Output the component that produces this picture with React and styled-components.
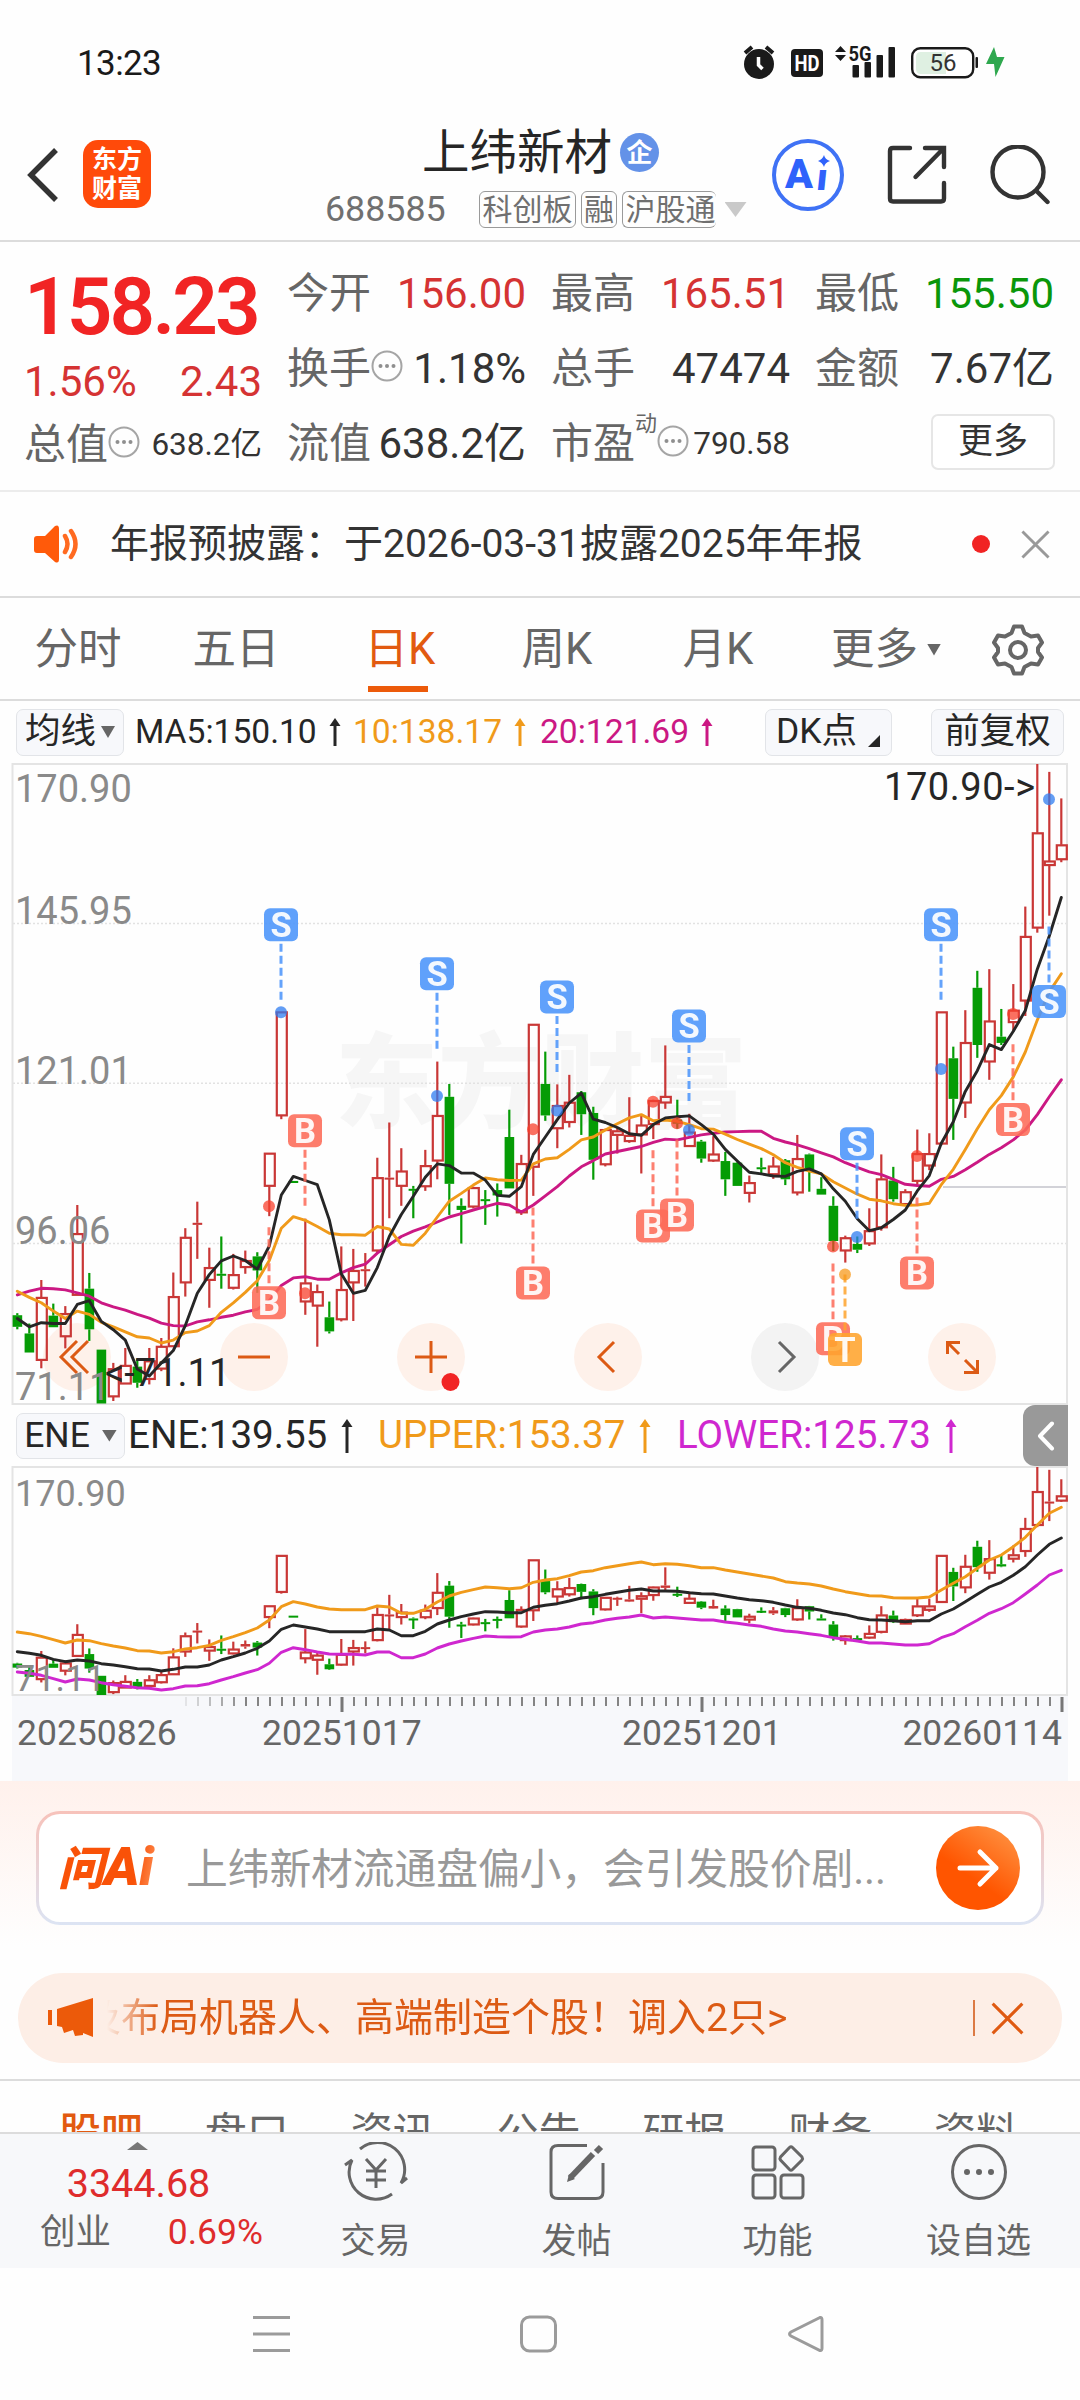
import styled, { createGlobalStyle } from "styled-components";

const RED = "#c93736";
const GREEN = "#059c05";

// [high, bodyTop, bodyBottom, low, up?] as levels below the top of the scale
const candles = [
  [1335, 1340, 1368, 1374, 0], [1360, 1384, 1430, 1430, 0], [1255, 1297, 1449, 1468, 1],
  [1312, 1341, 1369, 1369, 0], [1318, 1336, 1392, 1420, 1], [1074, 1143, 1292, 1292, 1],
  [1238, 1276, 1374, 1402, 0], [1423, 1423, 1553, 1553, 0], [1455, 1469, 1537, 1547, 1],
  [1419, 1461, 1506, 1506, 1], [1445, 1464, 1503, 1515, 0], [1419, 1450, 1495, 1507, 1],
  [1395, 1415, 1470, 1475, 1], [1237, 1295, 1416, 1416, 1], [1130, 1152, 1262, 1295, 1],
  [1066, 1117, 1122, 1204, 1], [1177, 1225, 1256, 1322, 1], [1150, 1240, 1244, 1276, 0],
  [1192, 1242, 1275, 1278, 1], [1184, 1208, 1225, 1240, 1], [1188, 1198, 1232, 1286, 0],
  [949, 949, 1029, 1101, 1], [608, 608, 859, 867, 1], [1016, 1016, 1021, 1021, 0],
  [1107, 1262, 1308, 1339, 1], [1266, 1283, 1318, 1416, 1], [1307, 1345, 1379, 1384, 0],
  [1174, 1278, 1351, 1355, 1], [1180, 1232, 1262, 1354, 1], [1190, 1229, 1233, 1271, 1],
  [960, 1008, 1185, 1190, 1], [875, 1008, 1011, 1106, 1], [937, 992, 1029, 1076, 1],
  [1028, 1035, 1039, 1106, 0], [941, 979, 1030, 1040, 1], [728, 858, 968, 1012, 1],
  [782, 813, 1023, 1098, 0], [1058, 1076, 1086, 1167, 0], [1030, 1032, 1079, 1082, 1],
  [1038, 1060, 1064, 1122, 0], [1022, 1038, 1051, 1102, 0], [844, 910, 1034, 1034, 0],
  [953, 974, 1093, 1098, 1], [638, 638, 983, 1052, 1], [704, 782, 858, 871, 0],
  [783, 834, 890, 937, 1], [760, 826, 875, 887, 1], [799, 802, 855, 905, 0],
  [837, 852, 965, 1013, 0], [890, 892, 977, 981, 1], [888, 895, 906, 950, 1],
  [814, 906, 921, 924, 1], [858, 881, 905, 998, 1], [820, 822, 880, 915, 1],
  [689, 812, 828, 842, 1], [820, 868, 878, 890, 0], [854, 898, 933, 934, 1],
  [917, 921, 962, 972, 0], [908, 951, 968, 970, 1], [946, 968, 1012, 1052, 0],
  [970, 972, 1028, 1028, 0], [1003, 1020, 1046, 1068, 1], [960, 983, 987, 998, 0],
  [958, 980, 1001, 1011, 1], [963, 966, 1012, 1026, 0], [905, 962, 1045, 1051, 1],
  [950, 952, 988, 1042, 0], [1007, 1035, 1049, 1049, 0], [1053, 1076, 1161, 1185, 0],
  [1148, 1153, 1185, 1213, 1], [1150, 1168, 1182, 1190, 0], [1082, 1136, 1168, 1173, 1],
  [952, 1011, 1129, 1136, 1], [982, 1015, 1060, 1066, 0], [1036, 1042, 1073, 1073, 1],
  [892, 950, 1017, 1025, 1], [901, 950, 980, 990, 1], [608, 608, 927, 930, 1],
  [692, 720, 818, 917, 0], [604, 682, 828, 864, 1], [509, 550, 688, 719, 0],
  [505, 630, 729, 772, 1], [601, 668, 683, 688, 0], [541, 604, 634, 656, 1],
  [354, 426, 582, 618, 1], [10, 176, 406, 417, 1], [29, 244, 255, 376, 1],
  [93, 205, 241, 247, 1],
];

const ma5 = [
  1348, 1368, 1358, 1360, 1360, 1314, 1305, 1355, 1375, 1400, 1470, 1487, 1455, 1425, 1365,
  1287, 1242, 1209, 1197, 1208, 1229, 1173, 1050, 1005, 1015, 1025, 1110, 1240, 1287, 1280,
  1225, 1150, 1097, 1053, 1007, 975, 979, 997, 997, 1014, 1051, 1053, 1030, 952, 910, 868,
  828, 804, 867, 875, 887, 902, 906, 880, 864, 861, 859, 880, 903, 940, 968, 995, 999, 1004,
  1005, 993, 987, 999, 1035, 1065, 1107, 1136, 1129, 1109, 1086, 1040, 1003, 925, 873, 800,
  750, 687, 699, 655, 605, 505, 425, 332,
];
const ma10 = [
  1282, 1297, 1310, 1330, 1348, 1330, 1338, 1357, 1368, 1380, 1392, 1395, 1407, 1400, 1382,
  1378, 1365, 1333, 1310, 1285, 1257, 1208, 1130, 1102, 1111, 1126, 1142, 1146, 1146, 1147,
  1126, 1132, 1169, 1171, 1142, 1103, 1065, 1046, 1026, 1009, 1013, 1015, 1014, 975, 963,
  960, 940, 917, 910, 893, 878, 864, 856, 871, 869, 872, 880, 890, 891, 903, 916, 927, 938,
  953, 972, 983, 992, 999, 1018, 1033, 1048, 1060, 1064, 1071, 1075, 1074, 1070, 1025, 988,
  940, 890, 844, 810, 765, 705, 628, 560, 516,
];
const ma20 = [
  1291, 1282, 1275, 1276, 1279, 1286, 1294, 1310, 1320, 1328, 1338, 1347, 1359, 1365, 1366,
  1356, 1351, 1345, 1340, 1332, 1326, 1305, 1268, 1250, 1247, 1253, 1253, 1238, 1225, 1217,
  1190, 1170, 1150, 1137, 1127, 1115, 1103, 1095, 1086, 1078, 1070, 1074, 1091, 1074, 1052,
  1030, 1004, 982, 967, 951, 945, 939, 933, 923, 915, 917, 911, 905, 901, 898, 897, 896, 896,
  913, 922, 929, 938, 948, 958, 972, 983, 994, 1001, 1012, 1024, 1027, 1029, 1012, 1005, 989,
  971, 952, 936, 917, 893, 856, 813, 772,
];

// ENE bands, levels on the lower panel (201 = top, 884 = bottom)
const eneMid = [
  755, 760, 766, 778, 785, 780, 783, 791, 795, 800, 806, 807, 813, 808, 801, 801, 795, 780,
  770, 759, 745, 723, 688, 675, 681, 687, 695, 695, 695, 695, 687, 690, 707, 707, 694, 672,
  660, 650, 642, 635, 636, 638, 638, 622, 616, 611, 603, 594, 590, 583, 577, 571, 567, 573,
  573, 574, 578, 581, 582, 588, 594, 599, 602, 607, 615, 622, 625, 631, 639, 644, 653, 659,
  660, 662, 665, 662, 662, 642, 627, 605, 583, 561, 547, 526, 500, 465, 433, 414,
];
const eneUpper = [
  696, 701, 709, 719, 729, 720, 722, 731, 738, 744, 752, 753, 759, 755, 747, 743, 736, 721,
  710, 698, 684, 660, 620, 605, 612, 621, 627, 629, 629, 629, 618, 621, 640, 640, 628, 606,
  588, 577, 569, 561, 563, 566, 563, 547, 540, 536, 527, 516, 512, 503, 497, 491, 486, 494,
  491, 493, 497, 503, 503, 510, 516, 522, 528, 534, 545, 549, 552, 558, 567, 575, 581, 587,
  588, 593, 594, 594, 591, 570, 550, 530, 505, 480, 465, 440, 412, 375, 340, 322,
];
const eneLower = [
  816, 820, 826, 836, 846, 837, 840, 848, 854, 859, 863, 865, 870, 866, 858, 857, 851, 840,
  830, 819, 809, 790, 757, 743, 749, 756, 762, 763, 763, 765, 756, 756, 773, 773, 762, 744,
  732, 723, 715, 708, 710, 711, 710, 696, 690, 687, 681, 672, 668, 660, 655, 651, 645, 654,
  651, 654, 657, 660, 660, 666, 670, 675, 679, 687, 693, 696, 701, 706, 713, 718, 723, 729,
  729, 732, 735, 735, 731, 713, 701, 680, 661, 640, 626, 608, 582, 555, 525, 511,
];

// trade marks: candle index, letter, badge level, dash from/to, dot level
const marks = [
  [22, "S", 398, 444, 580, 609],
  [24, "B", 895, 941, 1076, 1287],
  [21, "B", 1310, 1128, 1264, 1077],
  [35, "S", 516, 562, 697, 811],
  [45, "S", 572, 618, 753, 846],
  [43, "B", 1262, 1080, 1216, 891],
  [53, "B", 1125, 942, 1078, 825],
  [55, "B", 1098, 916, 1051, 877],
  [56, "S", 642, 688, 823, 893],
  [68, "B", 1397, 1215, 1350, 1174],
  [69, "T", 1423, 1242, 1376, 1242],
  [70, "S", 926, 972, 1107, 1151],
  [75, "B", 1238, 1056, 1191, 956],
  [77, "S", 398, 444, 580, 746],
  [83, "B", 868, 686, 823, 613],
  [86, "S", 583, 402, 538, 95],
];
const markColor = { S: "#4a94fb", B: "#fd6b58", T: "#ffa42e" };
const dotColor = { S: "#2f7cf0", B: "#f8402c", T: "#f79a1c" };

const xAt = (i) => 17.3 + i * 12;
const mainY = (v) => 1 + ((v - 10) / 1543) * 639.5;
const subY = (v) => 1 + ((v - 10) / 1543) * 228;
const bandY = (v) => 1 + (v - 201) / 3;
const toPoints = (list, y) => list.map((v, i) => `${xAt(i)},${y(v).toFixed(1)}`).join(" ");

function Candles({ y }) {
  return candles.map(([high, top, bottom, low, up], i) => {
    const x = xAt(i);
    const color = up ? RED : GREEN;
    const h = y(bottom) - y(top);
    const hollow = up && h > 3.2;
    return (
      <g key={i} stroke={color} strokeWidth="2.2" fill="none">
        {top > high && <path d={`M${x} ${y(high)}V${y(top)}`} />}
        {low > bottom && <path d={`M${x} ${y(bottom)}V${y(low)}`} />}
        {hollow ? (
          <rect x={x - 4.5} y={y(top) + 0.5} width="10" height={Math.max(h - 1, 1)} />
        ) : (
          <rect x={x - 4.7} y={y(top)} width="9.6" height={Math.max(h, 2)} fill={color} stroke="none" />
        )}
      </g>
    );
  });
}

function Line({ list, y, color }) {
  return (
    <polyline points={toPoints(list, y)} fill="none" stroke={color} strokeWidth="2.9" strokeLinejoin="round" strokeLinecap="round" />
  );
}

function Marks() {
  return marks.map(([i, letter, level, from, to, dot]) => {
    const x = xAt(i) - 0.3;
    const y = mainY(level);
    return (
      <g key={i + letter}>
        <path d={`M${x} ${mainY(from)}V${mainY(to)}`} stroke={markColor[letter]} strokeWidth="3" strokeDasharray="8 4" opacity="0.85" />
        <circle cx={x} cy={mainY(dot)} r="6" fill={dotColor[letter]} opacity="0.75" />
        <rect x={x - 17} y={y - 16.5} width="34" height="33" rx="6" fill={markColor[letter]} opacity="0.88" />
        <text x={x} y={y + 12.3} textAnchor="middle" fontSize="34.5" fontWeight="700" fill="#fff" opacity="0.93">
          {letter}
        </text>
      </g>
    );
  });
}

function MainChart() {
  const grid = [395, 780, 1167];
  const labels = [["170.90", 38.5], ["145.95", 161], ["121.01", 321], ["96.06", 481], ["71.11", 637]];
  return (
    <ChartSvg width="1080" height="642" viewBox="0 0 1080 642">
      <text x="541" y="357" textAnchor="middle" fontSize="103" fontWeight="900" fill="#f6f6f6">
        东方财富
      </text>
      {grid.map((v) => (
        <path key={v} d={`M13 ${mainY(v)}H1067`} stroke="#e2e2e2" strokeWidth="1.5" strokeDasharray="2 2" />
      ))}
      <path d="M943 424H1067" stroke="#d2d2d8" strokeWidth="2" />
      <rect x="12.5" y="1" width="1054.5" height="640" fill="none" stroke="#e4e4e4" strokeWidth="2" />
      <Candles y={mainY} />
      <Line list={ma20} y={mainY} color="#cb1883" />
      <Line list={ma10} y={mainY} color="#f09a1a" />
      <Line list={ma5} y={mainY} color="#262626" />
      <Marks />
      <g fontSize="38" fill="#8a8a8a">
        {labels.map(([t, y]) => (
          <text key={t} x="15" y={y}>{t}</text>
        ))}
      </g>
      <g fontSize="38" fill="#262626">
        <text x="884" y="36.5" textLength="151">170.90-&gt;</text>
        <text x="105" y="623">&lt;-71.11</text>
      </g>
    </ChartSvg>
  );
}

function EneChart() {
  const ticks = Array.from({ length: 74 }, (_, n) => n + 14);
  return (
    <ChartSvg width="1080" height="315" viewBox="0 0 1080 315">
      <rect x="12" y="230" width="1056" height="85" fill="#f7f8fb" />
      <rect x="12.5" y="1" width="1054.5" height="228" fill="none" stroke="#e4e4e4" strokeWidth="2" />
      <Candles y={subY} />
      <Line list={eneUpper} y={bandY} color="#f09a1a" />
      <Line list={eneLower} y={bandY} color="#cf27cf" />
      <Line list={eneMid} y={bandY} color="#262626" />
      {ticks.map((i) => {
        const big = i === 27 || i === 57 || i === 87;
        return (
          <path
            key={i}
            d={`M${xAt(i) + 0.7} 231V${big ? 246 : 240}`}
            stroke="#777"
            strokeWidth={big ? 3 : 1.8}
            opacity={Math.min(1, (i - 13) / 6)}
          />
        );
      })}
      <g fontSize="36" fill="#8a8a8a">
        <text x="15" y="40">170.90</text>
        <text x="15" y="225">71.11</text>
      </g>
      <g fontSize="35.5" fill="#666">
        <text x="17" y="279">20250826</text>
        <text x="262" y="279">20251017</text>
        <text x="622" y="279">20251201</text>
        <text x="1062" y="279" textAnchor="end">20260114</text>
      </g>
    </ChartSvg>
  );
}

function Arrow({ color, h = 28 }) {
  return (
    <svg width="12" height={h} viewBox={`0 0 12 ${h}`}>
      <path d={`M6 4V${h}`} stroke={color} strokeWidth="3" />
      <path d="M6 0L11.5 8H0.5Z" fill={color} />
    </svg>
  );
}

function Dots() {
  return (
    <svg width="32" height="32" viewBox="0 0 32 32">
      <circle cx="16" cy="16" r="14.5" fill="none" stroke="#a5a5a5" strokeWidth="2" />
      <g fill="#8f8f8f">
        <circle cx="9.5" cy="16" r="2" />
        <circle cx="16" cy="16" r="2" />
        <circle cx="22.5" cy="16" r="2" />
      </g>
    </svg>
  );
}

function Cross({ size, color, width }) {
  return (
    <svg width={size} height={size} viewBox="0 0 30 30">
      <path d="M1.5 1.5L28.5 28.5M28.5 1.5L1.5 28.5" stroke={color} strokeWidth={width} />
    </svg>
  );
}

function StatusIcons() {
  return (
    <svg width="262" height="40" viewBox="743 43 262 40">
      <g fill="#1a1a1a">
        <circle cx="759" cy="64" r="15" />
        <path d="M745 53L752 47M766 47L773 53" stroke="#1a1a1a" strokeWidth="4" />
        <path d="M758.5 57V65L762.5 69" stroke="#fff" strokeWidth="3.5" fill="none" />
        <rect x="791" y="49" width="32" height="28" rx="4" />
        <path d="M835 52L840.5 46L846 52ZM835 55L840.5 61L846 55Z" />
        <rect x="852.5" y="65" width="6.5" height="12.5" rx="1" />
        <rect x="864.5" y="62" width="6.5" height="15.5" rx="1" />
        <rect x="876.5" y="55" width="6.5" height="22.5" rx="1" />
        <rect x="888.5" y="47" width="6.5" height="30.5" rx="1" />
        <rect x="975.5" y="57" width="2.5" height="11" rx="1" />
        <text x="848.5" y="60.5" fontSize="21" fontWeight="700" textLength="23" lengthAdjust="spacingAndGlyphs">5G</text>
      </g>
      <text x="807" y="71" fontSize="22" fontWeight="700" fill="#fff" textAnchor="middle" textLength="25" lengthAdjust="spacingAndGlyphs">HD</text>
      <rect x="912.2" y="48.2" width="61" height="29" rx="8" fill="#fff" stroke="#1a1a1a" strokeWidth="2.4" />
      <path d="M921 52H946V74H921Q916 74 916 69V57Q916 52 921 52Z" fill="#dff0e2" />
      <text x="943" y="71" fontSize="24" fill="#333" textAnchor="middle">56</text>
      <path d="M994 47L986 64H994L995.5 77L1004.5 57H997Z" fill="#2fa84f" />
    </svg>
  );
}

const cols = [
  [
    { label: "今开", value: "156.00", tone: "#d53333" },
    { label: "换手", value: "1.18%", info: true },
    { label: "流值", value: "638.2亿" },
  ],
  [
    { label: "最高", value: "165.51", tone: "#d53333" },
    { label: "总手", value: "47474" },
    { label: "市盈", value: "790.58", sup: "动", info: true, small: true },
  ],
  [
    { label: "最低", value: "155.50", tone: "#0a970a" },
    { label: "金额", value: "7.67亿" },
  ],
];

function QuoteCell({ label, value, tone, info, small, sup }) {
  return (
    <Cell>
      <Label>
        {label}
        {sup && <Sup>{sup}</Sup>}
        {info && <Dots />}
      </Label>
      <Value $tone={tone} $small={small}>{value}</Value>
    </Cell>
  );
}

export default function App() {
  return (
    <Page>
      <GlobalStyle />
      <StatusBar>
        <Clock>13:23</Clock>
        <StatusIcons />
      </StatusBar>

      <Header>
        <svg width="32" height="54" viewBox="0 0 32 54">
          <path d="M30 2L5 27L30 52" fill="none" stroke="#333" strokeWidth="5.5" />
        </svg>
        <Logo>
          <span>东方</span>
          <span>财富</span>
        </Logo>
        <Titles>
          <TitleRow>
            上纬新材<Verified>企</Verified>
          </TitleRow>
          <CodeRow>
            <Code>688585</Code>
            <Tag>科创板</Tag>
            <Tag>融</Tag>
            <Tag $cut>沪股通</Tag>
            <Triangle $w={22} $h={15} $color="#c9c9c9" />
          </CodeRow>
        </Titles>
        <HeaderIcons>
          <svg width="72" height="72" viewBox="0 0 72 72">
            <circle cx="36" cy="36" r="34" fill="#fff" stroke="#3f72f5" strokeWidth="4" />
            <text x="13" y="49" fontSize="41" fontWeight="900" fill="#2f62fb">A</text>
            <text x="44" y="51" fontSize="38" fontWeight="900" fill="#2f62fb" transform="translate(5 0) skewX(-6)">i</text>
            <rect x="42" y="17" width="17" height="13" fill="#fff" />
            <path d="M52 16Q53 20.500 58 22Q53 23.500 52 28Q50.500 23.500 46 22Q50.500 20.500 52 16Z" fill="#2f62fb" />
          </svg>
          <svg width="60" height="60" viewBox="0 0 60 60" fill="none" stroke="#333" strokeWidth="4.4" strokeLinecap="round">
            <path d="M23 3H6Q3 3 3 6V53.500Q3 56.500 6 56.500H54Q57 56.500 57 53.500V38M38 3H57V22M56 4L28.500 32" />
          </svg>
          <svg width="60" height="60" viewBox="0 0 60 60" fill="none" stroke="#333" strokeWidth="4.4" strokeLinecap="round">
            <circle cx="28" cy="27" r="25.500" />
            <path d="M46.500 46L57.500 57" />
          </svg>
        </HeaderIcons>
      </Header>

      <Quote>
        <QuoteColumn>
          <Price>158.23</Price>
          <Change>
            <span>1.56%</span>
            <span>2.43</span>
          </Change>
          <QuoteCell label="总值" value="638.2亿" info small />
        </QuoteColumn>
        {cols.map((cells, n) => (
          <QuoteColumn key={n}>
            {cells.map((c) => (
              <QuoteCell key={c.label} {...c} />
            ))}
            {n === 2 && (
              <Cell $end>
                <MoreButton>更多</MoreButton>
              </Cell>
            )}
          </QuoteColumn>
        ))}
      </Quote>

      <Notice>
        <svg width="46" height="38" viewBox="0 0 46 38">
          <path d="M3 11H11L21 1Q25 -1 25 4V34Q25 39 21 37L11 28H3Q0 28 0 25V14Q0 11 3 11Z" fill="#ff5a0a" />
          <path d="M31 11Q36 19 31 27M37 6Q46 19 37 32" fill="none" stroke="#ff6a20" strokeWidth="4.5" strokeLinecap="round" />
        </svg>
        <NoticeText>年报预披露：于2026-03-31披露2025年年报</NoticeText>
        <RedDot />
        <Cross size={29} color="#999" width={3} />
      </Notice>

      <Periods>
        <Period>分时</Period>
        <Period>五日</Period>
        <Period $active>日K</Period>
        <Period>周K</Period>
        <Period>月K</Period>
        <Period>
          更多
          <Triangle $w={14} $h={12} $color="#666" $gap={9} />
        </Period>
        <Period>
          <svg width="52" height="52" viewBox="0 0 52 52" fill="none" stroke="#666" strokeWidth="4" strokeLinejoin="round">
            <path d="M22 2.500H30L32.500 9L39 12.500L46 11.500L50 18.500L46 24V28L50 33.500L46 40.500L39 39.500L32.500 43L30 49.500H22L19.500 43L13 39.500L6 40.500L2 33.500L6 28V24L2 18.500L6 11.500L13 12.500L19.500 9Z" />
            <circle cx="26" cy="26" r="8" />
          </svg>
        </Period>
      </Periods>

      <Averages>
        <Pill $w={108}>
          均线
          <Triangle $w={14} $h={12} $color="#666" $gap={5} />
        </Pill>
        <Average $w={218} $color="#262626">MA5:150.10<Arrow color="#262626" /></Average>
        <Average $w={187} $color="#f09a1a">10:138.17<Arrow color="#f09a1a" /></Average>
        <Average $w={180} $color="#cb1883">20:121.69<Arrow color="#cb1883" /></Average>
        <Pill $w={127} $push>
          DK点
          <svg width="13" height="30" viewBox="0 0 13 30"><path d="M12 18V30H0Z" fill="#262626" /></svg>
        </Pill>
        <Pill $w={133} $left={39}>前复权</Pill>
      </Averages>

      <ChartArea>
        <Controls>
          <RoundButton>
            <path d="M34 18L18 34L34 50M45 18L29 34L45 50" />
          </RoundButton>
          <RoundButton>
            <path d="M18 34H50" />
          </RoundButton>
          <RoundButton dot>
            <path d="M18 34H50M34 18V50" />
          </RoundButton>
          <RoundButton>
            <path d="M40 19L25 34L40 49" />
          </RoundButton>
          <RoundButton gray>
            <path d="M28 19L43 34L28 49" />
          </RoundButton>
          <RoundButton>
            <path d="M19.500 31V19.500H32M20 20L31 31M49.500 37V49.500H36M49 49L37 37" />
          </RoundButton>
        </Controls>
        <MainChart />
      </ChartArea>

      <EneBar>
        <Pill $w={109} $h={46}>
          ENE
          <Triangle $w={15} $h={12} $color="#666" $gap={12} />
        </Pill>
        <EneValue $w={250} $color="#262626">ENE:139.55<Arrow color="#262626" h={34} /></EneValue>
        <EneValue $w={299} $color="#f09a1a">UPPER:153.37<Arrow color="#f09a1a" h={34} /></EneValue>
        <EneValue $w={290} $color="#cf27cf">LOWER:125.73<Arrow color="#cf27cf" h={34} /></EneValue>
        <Collapse>
          <svg width="18" height="30" viewBox="0 0 18 30">
            <path d="M15 2.500L3 15L15 27.500" fill="none" stroke="#fff" strokeWidth="4" strokeLinecap="round" strokeLinejoin="round" />
          </svg>
        </Collapse>
      </EneBar>
      <EneChart />

      <Promo>
        <AskBox>
          <AskLogo>问<i>Ai</i></AskLogo>
          <AskText>上纬新材流通盘偏小，会引发股价剧...</AskText>
          <AskButton>
            <svg width="44" height="40" viewBox="0 0 44 40" fill="none" stroke="#fff" strokeWidth="5" strokeLinecap="round" strokeLinejoin="round">
              <path d="M4 20H40M24 4L40 20L24 36" />
            </svg>
          </AskButton>
        </AskBox>
        <Banner>
          <svg width="45" height="40" viewBox="0 0 45 40" fill="#ec5a0a">
            <rect x="0" y="12" width="4" height="15" />
            <path d="M9 11L45 0V39L35 35V37L27 38L25 32L16 35L14 29L9 28Z" />
          </svg>
          <BannerText>及布局机器人、高端制造个股！调入2只&gt;</BannerText>
          <Divider />
          <Cross size={33} color="#df5a12" width={2.8} />
        </Banner>
      </Promo>

      <Sections>
        {["股吧", "盘口", "资讯", "公告", "研报", "财务", "资料"].map((s, i) => (
          <Section key={s} $active={i === 0}>{s}</Section>
        ))}
      </Sections>

      <Footer>
        <IndexBox>
          <svg width="21" height="8" viewBox="0 0 21 8"><path d="M0 8L10.500 0L21 8Z" fill="#777" /></svg>
          <IndexValue>3344.68</IndexValue>
          <IndexRow>
            <span>创业</span>
            <IndexPct>0.69%</IndexPct>
          </IndexRow>
        </IndexBox>
        <Action>
          <svg width="66" height="60" viewBox="0 0 66 60" fill="none" stroke="#666" strokeWidth="3">
            <path d="M17 7A27 27 0 0 1 58 41L64 36M49 52A27 27 0 0 1 9 18L2 23" />
            <path d="M23 17L33 28L43 17M33 28V46M23 29H43M23 38H43" />
          </svg>
          交易
        </Action>
        <Action>
          <svg width="56" height="60" viewBox="0 0 56 60" fill="none" stroke="#666" strokeWidth="3">
            <path d="M38 3.500H9Q2 3.500 2 10V50Q2 56.500 9 56.500H47Q54 56.500 54 50V21" />
            <path d="M21 36L44 12" strokeWidth="6" />
            <path d="M47 10L52 5" strokeWidth="6" />
            <path d="M18 40L20 32L26 37Z" fill="#666" stroke="none" />
          </svg>
          发帖
        </Action>
        <Action>
          <svg width="54" height="60" viewBox="0 0 54 60" fill="none" stroke="#666" strokeWidth="3">
            <rect x="2" y="5" width="22" height="23" rx="3" />
            <rect x="2" y="33" width="22" height="23" rx="3" />
            <rect x="30" y="33" width="22" height="23" rx="3" />
            <path d="M38.500 5.500L29.500 15Q28.500 16.500 29.500 18L38.500 27.500Q40 29 41.500 27.500L51 18Q52 16.500 51 15L41.500 5.500Q40 4 38.500 5.500Z" />
          </svg>
          功能
        </Action>
        <Action>
          <svg width="58" height="60" viewBox="0 0 58 60">
            <circle cx="29" cy="30" r="26.500" fill="none" stroke="#666" strokeWidth="3" />
            <g fill="#666"><circle cx="17" cy="30" r="3" /><circle cx="29" cy="30" r="3" /><circle cx="41" cy="30" r="3" /></g>
          </svg>
          设自选
        </Action>
      </Footer>

      <NavBar>
        <svg width="37" height="38" viewBox="0 0 37 38" stroke="#9b9b9b" strokeWidth="3">
          <path d="M0 2.500H37M0 19H37M0 35.500H37" />
        </svg>
        <svg width="37" height="38" viewBox="0 0 37 38" fill="none" stroke="#9b9b9b" strokeWidth="3">
          <rect x="1.500" y="2" width="34" height="34" rx="8" />
        </svg>
        <svg width="37" height="38" viewBox="0 0 37 38" fill="none" stroke="#9b9b9b" strokeWidth="3">
          <path d="M33 2.500L4 17Q1 19 4 21L33 35.500Q35 36 35 33V5Q35 2 33 2.500Z" />
        </svg>
      </NavBar>
    </Page>
  );
}

function RoundButton({ children, gray, dot }) {
  return (
    <Round $gray={gray}>
      <svg width="68" height="68" viewBox="0 0 68 68" fill="none" stroke={gray ? "#666" : "#dc5a14"} strokeWidth="3">
        {children}
        {dot && <circle cx="53.500" cy="59" r="9" fill="#f12424" stroke="none" />}
      </svg>
    </Round>
  );
}

const GlobalStyle = createGlobalStyle`
  * {
    box-sizing: border-box;
  }
  body {
    margin: 0;
    background: #fefefe;
  }
  svg {
    display: block;
    flex: none;
    font-family: Roboto, "Noto Sans CJK SC", sans-serif;
  }
`;

const Page = styled.main`
  display: flex;
  flex-direction: column;
  width: 1080px;
  height: 2400px;
  overflow: hidden;
  background: #fefefe;
  color: #333;
  font-family: Roboto, "Noto Sans CJK SC", sans-serif;
  line-height: 1;
  white-space: nowrap;
`;

const StatusBar = styled.div`
  display: flex;
  align-items: center;
  justify-content: space-between;
  flex: none;
  height: 109px;
  padding: 16px 75px 0 77px;
`;

const Clock = styled.span`
  padding-top: 2px;
  font-size: 35px;
  letter-spacing: -0.6px;
  color: #1a1a1a;
`;

const Header = styled.header`
  display: flex;
  align-items: center;
  flex: none;
  height: 131px;
  padding-left: 26px;
`;

const Logo = styled.div`
  display: flex;
  flex-direction: column;
  align-items: center;
  justify-content: center;
  width: 68px;
  height: 68px;
  margin: -1px 0 0 25px;
  border-radius: 15px;
  background: #ff4a0a;
  color: #fff;
  font-size: 25px;
  font-weight: 700;
  line-height: 29px;
`;

const Titles = styled.div`
  width: 430px;
  height: 131px;
  margin-left: 174px;
  padding-top: 17px;
`;

const TitleRow = styled.div`
  display: flex;
  align-items: center;
  height: 56px;
  padding-left: 97px;
  font-size: 47.500px;
  color: #262626;
`;

const Verified = styled.span`
  display: flex;
  align-items: center;
  justify-content: center;
  width: 39px;
  height: 39px;
  margin: -3px 0 0 8px;
  border-radius: 50%;
  background: #6492e8;
  color: #fff;
  font-size: 26px;
  font-weight: 700;
`;

const CodeRow = styled.div`
  display: flex;
  align-items: center;
  height: 55px;
  color: #707070;
`;

const Code = styled.span`
  width: 154px;
  font-size: 35.800px;
`;

const Tag = styled.span`
  display: flex;
  align-items: center;
  height: 37px;
  margin-right: 5px;
  padding: 0 ${(p) => (p.$cut ? 0 : 2)}px 0 2.5px;
  border: 1.500px solid #9a9a9a;
  border-right-width: ${(p) => (p.$cut ? 0 : 1.5)}px;
  border-radius: 6px;
  font-size: 30px;
`;

const Triangle = styled.span`
  width: ${(p) => p.$w}px;
  height: ${(p) => p.$h}px;
  margin-left: ${(p) => p.$gap || 4}px;
  background: ${(p) => p.$color};
  clip-path: polygon(0 0, 100% 0, 50% 100%);
`;

const HeaderIcons = styled.div`
  display: flex;
  align-items: center;
  gap: 43px;
  margin-left: 17px;
`;

const Quote = styled.section`
  display: grid;
  grid-template-columns: 238px 239px 239px 239px;
  column-gap: 25px;
  flex: none;
  height: 252px;
  padding: 14px 0 0 24px;
  border-top: 2px solid #dcdcdc;
  border-bottom: 2px solid #ececec;
`;

const QuoteColumn = styled.div`
  display: flex;
  flex-direction: column;
`;

const Price = styled.div`
  height: 100px;
  color: #f12424;
  font-size: 80px;
  font-weight: 600;
  line-height: 102px;
  letter-spacing: -2.9px;
`;

const Change = styled.div`
  display: flex;
  justify-content: space-between;
  align-items: center;
  height: 51px;
  color: #d53333;
  font-size: 42px;
`;

const Cell = styled.div`
  display: flex;
  align-items: center;
  justify-content: ${(p) => (p.$end ? "flex-end" : "space-between")};
  height: 75px;
`;

const Label = styled.span`
  display: flex;
  align-items: center;
  color: #666;
  font-size: 42px;

  svg {
    margin: -6px 0 0 0;
  }
`;

const Sup = styled.sup`
  align-self: flex-start;
  margin-top: -10px;
  font-size: 22px;
  line-height: 22px;
`;

const Value = styled.span`
  color: ${(p) => p.$tone || "#333"};
  font-size: ${(p) => (p.$small ? 31.5 : 42)}px;
`;

const MoreButton = styled.button`
  width: 124px;
  height: 56px;
  margin: -4px -1px 0 0;
  padding: 0;
  border: 2px solid #e6e6e6;
  border-radius: 7px;
  background: #fff;
  color: #333;
  font: inherit;
  font-size: 35px;
`;

const Notice = styled.section`
  display: flex;
  align-items: center;
  flex: none;
  height: 104px;
  padding: 0 30px 0 34px;
`;

const NoticeText = styled.span`
  flex: 1;
  margin-left: 30px;
  padding-top: 1px;
  font-size: 39px;
`;

const RedDot = styled.span`
  width: 18px;
  height: 18px;
  margin-right: 31px;
  border-radius: 50%;
  background: #f12424;
`;

const Periods = styled.nav`
  display: grid;
  grid-template-columns: 156px 160px 168px 146px 176px 160px 104px;
  flex: none;
  height: 105px;
  border-top: 2px solid #dcdcdc;
  border-bottom: 2px solid #dcdcdc;
`;

const Period = styled.span`
  display: flex;
  align-items: center;
  justify-content: center;
  height: 101px;
  padding-top: 2px;
  color: ${(p) => (p.$active ? "#e25a10" : "#666")};
  font-size: 43.500px;

  ${(p) =>
    p.$active &&
    `background: linear-gradient(#ec5a0a, #ec5a0a) 52px 88px / 60px 6px no-repeat;`}
`;

const Averages = styled.div`
  display: flex;
  align-items: center;
  flex: none;
  height: 62px;
  padding: 0 16px 0 16px;
`;

const Pill = styled.button`
  display: flex;
  align-items: center;
  justify-content: center;
  width: ${(p) => p.$w}px;
  height: ${(p) => p.$h || 47}px;
  margin-left: ${(p) => (p.$push ? "auto" : `${p.$left || 0}px`)};
  padding: 0;
  border: 1.500px solid #e2e4e8;
  border-radius: 7px;
  background: #f7f8fb;
  color: #262626;
  font: inherit;
  font-size: 35.500px;

  svg {
    margin-left: 11px;
  }
`;

const Average = styled.span`
  display: flex;
  align-items: center;
  width: ${(p) => p.$w}px;
  color: ${(p) => p.$color};
  font-size: 33.600px;

  &:nth-child(2) {
    margin-left: 11px;
  }

  svg {
    margin-left: 12px;
  }
`;

const ChartArea = styled.section`
  position: relative;
  flex: none;
  height: 642px;
`;

const ChartSvg = styled.svg`
  position: relative;
`;

const Controls = styled.div`
  position: absolute;
  left: 43px;
  top: 560px;
  display: flex;
  gap: 109px;
`;

const Round = styled.button`
  width: 68px;
  height: 68px;
  padding: 0;
  border: 0;
  border-radius: 50%;
  background: ${(p) => (p.$gray ? "#f3f3f3" : "#fef1ea")};

  svg {
    overflow: visible;
  }
`;

const EneBar = styled.div`
  display: flex;
  align-items: center;
  flex: none;
  height: 61px;
  padding: 0 12px 0 16px;
`;

const EneValue = styled.span`
  display: flex;
  align-items: center;
  width: ${(p) => p.$w}px;
  color: ${(p) => p.$color};
  font-size: 38.600px;

  &:nth-child(2) {
    margin-left: 3px;
  }

  svg {
    margin-left: 14px;
  }
`;

const Collapse = styled.button`
  display: flex;
  align-items: center;
  justify-content: center;
  width: 45px;
  height: 61px;
  margin-left: auto;
  padding: 0;
  border: 0;
  border-radius: 12px 0 0 12px;
  background: #999;
`;

const Promo = styled.section`
  flex: none;
  height: 298px;
  padding: 30px 18px 0;
  background: linear-gradient(#fff1ec, #fefefe 165px);
`;

const AskBox = styled.div`
  display: flex;
  align-items: center;
  height: 114px;
  margin: 0 18px;
  padding: 0 21px 0 19px;
  border: 3px solid transparent;
  border-radius: 24px;
  background:
    linear-gradient(#fff, #fff) padding-box,
    linear-gradient(#f7c2ba, #dce4f3) border-box;
`;

const AskLogo = styled.span`
  width: 128px;
  background: linear-gradient(100deg, #f95208 60%, #ffa06a 80%);
  background-clip: text;
  color: transparent;
  font-size: 46px;
  font-style: italic;
  font-weight: 900;
  line-height: 60px;

  i {
    font-size: 54px;
    letter-spacing: -0.5px;
  }
`;

const AskText = styled.span`
  flex: 1;
  padding-top: 3px;
  color: #999;
  font-size: 41.800px;
  letter-spacing: -0.1px;
`;

const AskButton = styled.button`
  display: flex;
  align-items: center;
  justify-content: center;
  width: 84px;
  height: 84px;
  padding: 0;
  border: 0;
  border-radius: 50%;
  background: linear-gradient(215deg, #ff9a4a, #ff5500 60%);
`;

const Banner = styled.div`
  display: flex;
  align-items: center;
  height: 90px;
  margin-top: 48px;
  padding: 0 38px 0 30px;
  border-radius: 45px;
  background: #fdeee6;
`;

const BannerText = styled.span`
  display: flex;
  justify-content: flex-start;
  flex: 1;
  overflow: hidden;
  margin-left: 14px;
  color: #dc5a14;
  font-size: 39px;
  line-height: 50px;
  text-indent: -25px;
  mask-image: linear-gradient(90deg, transparent, #000 50px);
`;

const Divider = styled.span`
  width: 2px;
  height: 36px;
  margin-right: 16px;
  background: #dc7a44;
`;

const Sections = styled.nav`
  display: grid;
  grid-template-columns: repeat(7, 1fr);
  flex: none;
  height: 53px;
  padding: 31px 31px 0 28px;
  overflow: hidden;
  border-top: 2px solid #dcdcdc;
`;

const Section = styled.span`
  color: ${(p) => (p.$active ? "#e25a10" : "#666")};
  font-size: 42px;
  font-weight: ${(p) => (p.$active ? 500 : 400)};
  line-height: 44px;
  text-align: center;
`;

const Footer = styled.footer`
  display: grid;
  grid-template-columns: 275px repeat(4, 201px);
  flex: none;
  height: 136px;
  border-top: 2px solid #dcdcdc;
  background: #f7f8fa;
`;

const IndexBox = styled.div`
  display: flex;
  flex-direction: column;
  align-items: center;
  padding-top: 8px;
`;

const IndexValue = styled.span`
  margin: 14px 0 0 2px;
  color: #df2c2c;
  font-size: 39.500px;
`;

const IndexRow = styled.div`
  display: flex;
  justify-content: space-between;
  align-items: center;
  width: 223px;
  margin-top: 11px;
  margin-left: 28px;
  color: #666;
  font-size: 35.500px;
`;

const IndexPct = styled.span`
  color: #df2c2c;
`;

const Action = styled.div`
  display: flex;
  flex-direction: column;
  align-items: center;
  justify-content: space-between;
  padding: 8px 0 9px;
  color: #666;
  font-size: 35px;
`;

const NavBar = styled.nav`
  display: flex;
  flex: none;
  gap: 230px;
  height: 132px;
  padding: 47px 0 0 253px;
`;
